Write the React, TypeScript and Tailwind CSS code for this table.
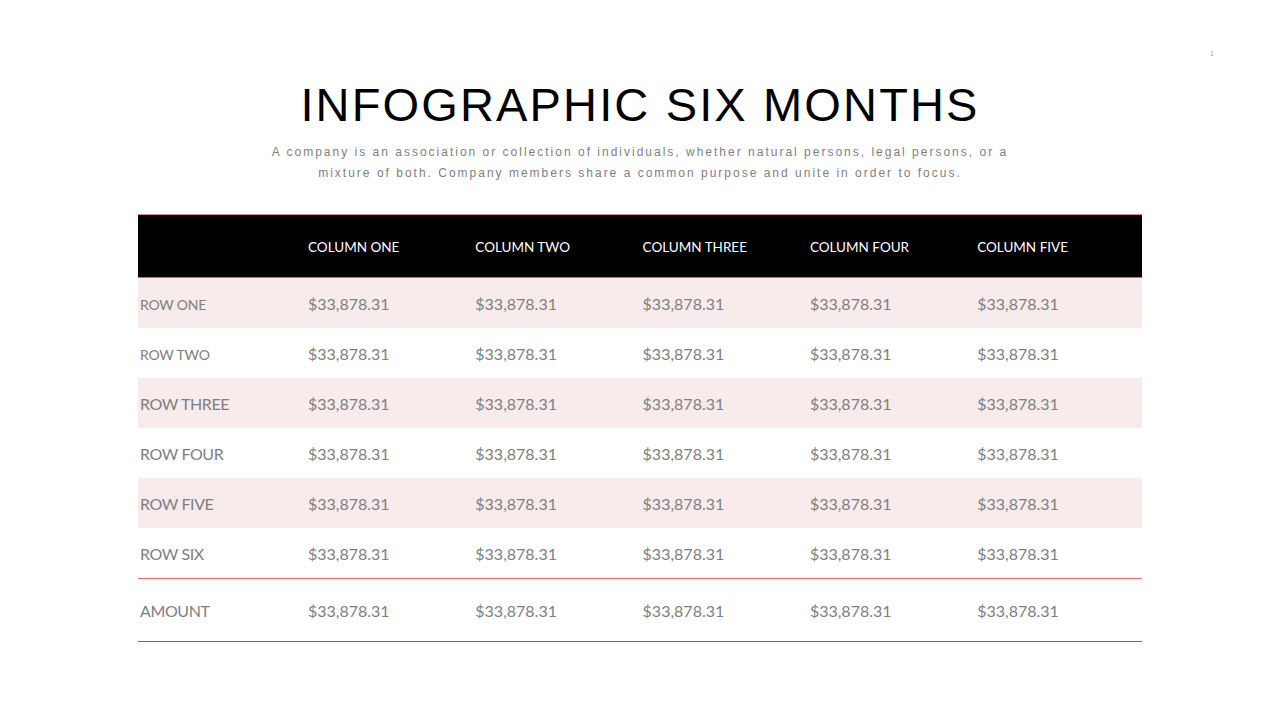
const columns = ["COLUMN ONE", "COLUMN TWO", "COLUMN THREE", "COLUMN FOUR", "COLUMN FIVE"];

const rows = [
  { label: "ROW ONE", small: true, shaded: true },
  { label: "ROW TWO", small: true, shaded: false },
  { label: "ROW THREE", small: false, shaded: true },
  { label: "ROW FOUR", small: false, shaded: false },
  { label: "ROW FIVE", small: false, shaded: true },
  { label: "ROW SIX", small: false, shaded: false },
];

const value = "$33,878.31";

export default function App() {
  return (
    <div className="relative w-[1280px] h-[720px] bg-white overflow-hidden">
      {/* slide number */}
      <span className="absolute left-[1210px] top-[49px] text-[7px] text-gray-400 font-['Liberation_Sans',sans-serif]">
        1
      </span>

      <div className="flex flex-col items-center pt-[78px]">
        <h1 className="font-['Liberation_Sans',Arial,sans-serif] text-[47px] leading-[54px] tracking-[2.15px] text-black">
          INFOGRAPHIC SIX MONTHS
        </h1>
        <p className="mt-[10px] w-[760px] text-center font-['Liberation_Sans',Arial,sans-serif] text-[12px] leading-[21px] tracking-[2px] text-[#7f7f7f]">
          A company is an association or collection of individuals, whether natural persons, legal persons, or a
          mixture of both. Company members share a common purpose and unite in order to focus.
        </p>
      </div>

      <div className="mx-[138px] mt-[30px] font-['Lato',sans-serif]">
        {/* header */}
        <div className="flex h-[64px] items-center bg-black border-t border-b border-t-[#d88a8a] border-b-[#c96a6a] pt-[3px]">
          <div className="w-[170px] shrink-0" />
          {columns.map((c) => (
            <div key={c} className="w-[167.3px] shrink-0 text-[13.5px] text-white">
              {c}
            </div>
          ))}
        </div>

        {rows.map((r) => (
          <div
            key={r.label}
            className={`flex h-[50px] items-center pt-[2px] ${r.shaded ? "bg-[#f8ebeb]" : "bg-white"}`}
          >
            <div
              className={`w-[170px] shrink-0 pl-[2px] text-[#7f7f7f] ${
                r.small ? "text-[14px] tracking-[-0.2px]" : "text-[16px] tracking-[-0.4px]"
              }`}
            >
              {r.label}
            </div>
            {columns.map((c) => (
              <div key={c} className="w-[167.3px] shrink-0 text-[16px] text-[#7f7f7f]">
                {value}
              </div>
            ))}
          </div>
        ))}

        <div className="flex h-[64px] items-center pt-[2px] border-t border-b border-t-[#e06a6a] border-b-[#d64545]">
          <div className="w-[170px] shrink-0 pl-[2px] text-[16px] text-[#7f7f7f] tracking-[-0.4px]">AMOUNT</div>
          {columns.map((c) => (
            <div key={c} className="w-[167.3px] shrink-0 text-[16px] text-[#7f7f7f]">
              {value}
            </div>
          ))}
        </div>
      </div>
    </div>
  );
}
